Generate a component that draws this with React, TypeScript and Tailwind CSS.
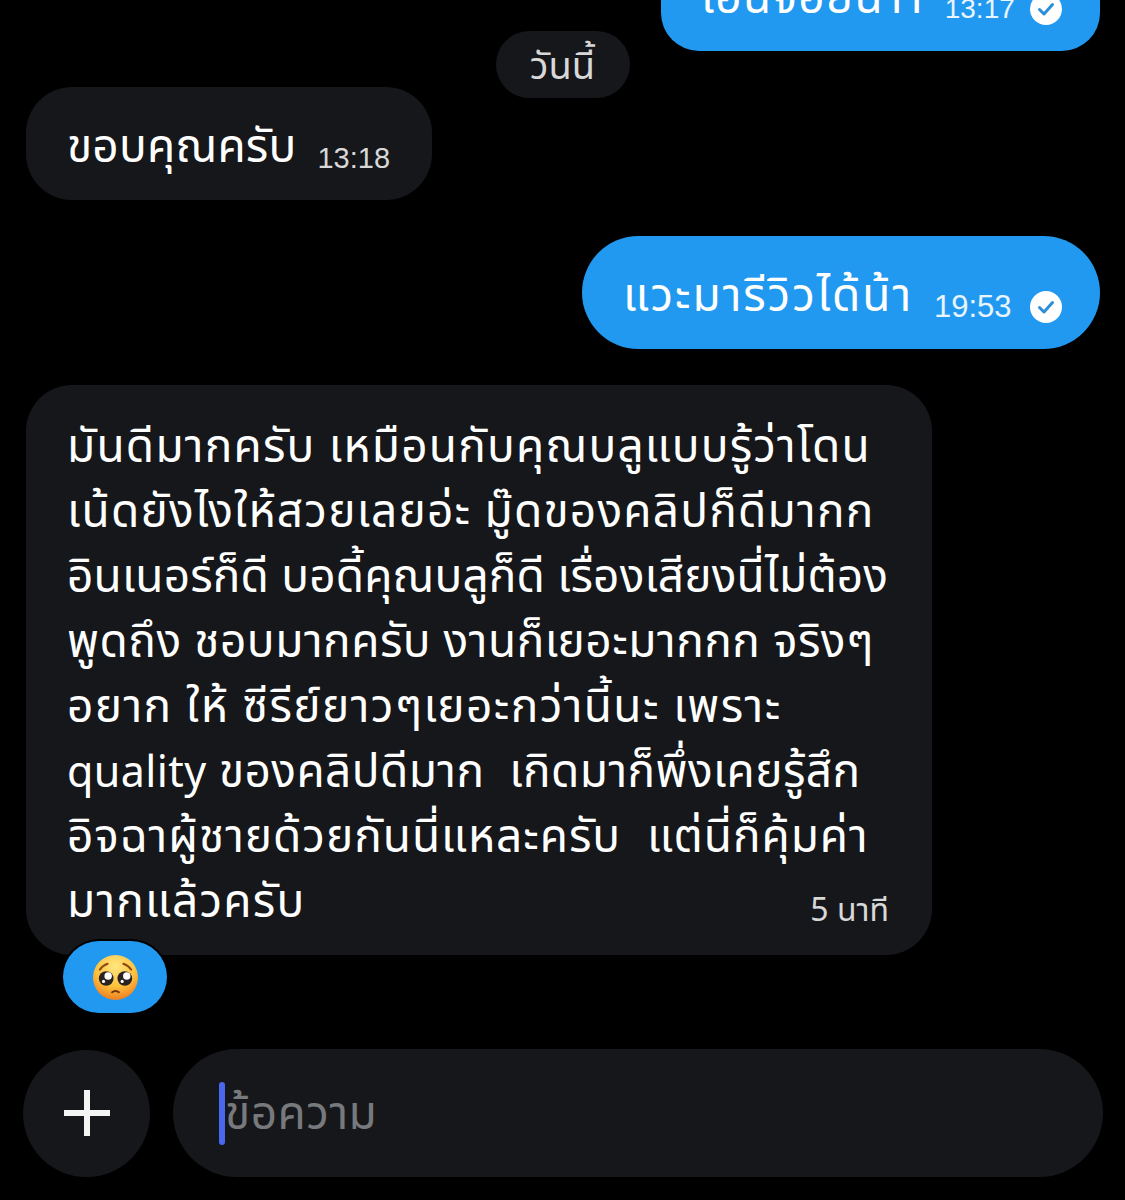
const thaiFont = "font-['Noto_Sans','Noto_Sans_Thai','Noto_Sans_CJK_SC','DejaVu_Sans',sans-serif]";

const lines = [
  { text: 'มันดีมากครับ เหมือนกับคุณบลูแบบรู้ว่าโดน', track: 'tracking-[1.2px]' },
  { text: 'เน้ดยังไงให้สวยเลยอ่ะ มู๊ดของคลิปก็ดีมากก', track: 'tracking-[1.2px]' },
  { text: 'อินเนอร์ก็ดี บอดี้คุณบลูก็ดี เรื่องเสียงนี่ไม่ต้อง', track: 'tracking-[0.15px]' },
  { text: 'พูดถึง ชอบมากครับ งานก็เยอะมากกก จริงๆ', track: 'tracking-[0.5px]' },
  { text: 'อยาก ให้ ซีรีย์ยาวๆเยอะกว่านี้นะ เพราะ', track: 'tracking-[1.4px]' },
];

const ReadTick = () => (
  <svg viewBox="0 0 32 32" className="size-8 shrink-0">
    <circle cx="16" cy="16" r="16" fill="#fff" />
    <path d="M9.500 16.500l4.500 4.500 8.500-9.500" fill="none" stroke="#2a8fd8" strokeWidth="3" strokeLinecap="round" strokeLinejoin="round" />
  </svg>
);

const PleadingFace = () => (
  <svg viewBox="0 0 48 48" className="size-[47px]">
    <defs>
      <radialGradient id="face" cx="50%" cy="25%" r="75%">
        <stop offset="0%" stopColor="#ffe680" />
        <stop offset="60%" stopColor="#fdc13c" />
        <stop offset="100%" stopColor="#ee7f22" />
      </radialGradient>
    </defs>
    <circle cx="24" cy="24" r="23" fill="url(#face)" />
    <path d="M8 16c2-3 5-5 8-6M40 16c-2-3-5-5-8-6" fill="none" stroke="#8a4a12" strokeWidth="2" strokeLinecap="round" />
    <circle cx="14.500" cy="25" r="7.500" fill="#2a2320" />
    <circle cx="33.500" cy="25" r="7.500" fill="#2a2320" />
    <circle cx="16.500" cy="22.500" r="3.800" fill="#fff" />
    <circle cx="35.500" cy="22.500" r="3.800" fill="#fff" />
    <circle cx="11.800" cy="28" r="1.600" fill="#fff" />
    <circle cx="30.800" cy="28" r="1.600" fill="#fff" />
    <path d="M20.500 39c2-1.500 5-1.500 7 0" fill="none" stroke="#6d3510" strokeWidth="2" strokeLinecap="round" />
  </svg>
);

export default function App() {
  return (
    <div className={`h-[1200px] w-[1125px] overflow-hidden bg-black text-white ${thaiFont}`}>
      <div className="flex justify-end pr-[25px]">
        <div className="-mt-[62px] flex h-[113px] w-[439px] items-center gap-[21px] rounded-[38px] bg-[#2299f0] pl-[40px]">
          <span className="text-[46px] leading-none tracking-[1.25px] whitespace-nowrap">เอ็นจ๋อยน้าา</span>
          <span className="mt-[29px] text-[28px] font-['Liberation_Sans',sans-serif] leading-none text-white/90">13:17</span>
          <span className="-ml-[6px] mt-[29px]"><ReadTick /></span>
        </div>
      </div>

      <div className="mt-[-20px] flex justify-center">
        <div className="flex h-[67px] w-[134px] items-center justify-center rounded-[34px] bg-[#16171a] text-[38px] text-[#d8d8d8]">วันนี้</div>
      </div>

      <div className="mt-[-11px] pl-[26px]">
        <div className="flex h-[113px] w-[406px] items-center gap-[21px] rounded-[46px] bg-[#16171a] pl-[41px]">
          <span className="text-[46px] leading-none tracking-[0.2px]">ขอบคุณครับ</span>
          <span className="mt-[30px] text-[29px] font-['Liberation_Sans',sans-serif] leading-none text-[#d8d8d8]">13:18</span>
        </div>
      </div>

      <div className="mt-[36px] flex justify-end pr-[25px]">
        <div className="flex h-[113px] w-[518px] items-center gap-[21px] rounded-[57px] bg-[#2299f0] pl-[41px]">
          <span className="text-[46px] leading-none tracking-[1.9px] whitespace-nowrap">แวะมารีวิวได้น้า</span>
          <span className="mt-[28px] text-[31px] font-['Liberation_Sans',sans-serif] leading-none text-white/90">19:53</span>
          <span className="-ml-[3px] mt-[28px]"><ReadTick /></span>
        </div>
      </div>

      <div className="relative mt-[36px] ml-[26px] h-[570px] w-[906px] rounded-[46px] bg-[#16171a] pl-[41px] pt-[27px]">
        {lines.map((line) => (
          <div key={line.text} className={`h-[65px] whitespace-pre text-[46px] leading-[65px] ${line.track}`}>{line.text}</div>
        ))}
        <div className="h-[65px] whitespace-pre text-[46px] leading-[65px] tracking-[0.4px]">
          <span className="text-[43px]">quality</span> ของคลิปดีมาก  เกิดมาก็พึ่งเคยรู้สึก
        </div>
        <div className="h-[65px] whitespace-pre text-[46px] leading-[65px] tracking-[0.95px]">อิจฉาผู้ชายด้วยกันนี่แหละครับ  แต่นี่ก็คุ้มค่า</div>
        <div className="flex items-start justify-between pr-[43px]">
          <span className="h-[65px] text-[46px] leading-[65px] tracking-[1.2px]">มากแล้วครับ</span>
          <span className="mt-[26px] text-[32px] leading-none text-[#d8d8d8]">5 นาที</span>
        </div>
        <div className="absolute left-[37px] top-[556px] flex h-[72px] w-[104px] items-center justify-center rounded-[36px] bg-[#2299f0] ring-2 ring-black">
          <PleadingFace />
        </div>
      </div>

      <div className="mt-[94px] flex items-center gap-[23px] pl-[23px]">
        <div className="flex size-[127px] items-center justify-center rounded-full bg-[#16171a]">
          <svg viewBox="0 0 48 48" className="size-[48px]">
            <path d="M24 1v46M1 24h46" stroke="#f4f4f4" strokeWidth="6" />
          </svg>
        </div>
        <div className="flex h-[128px] w-[930px] items-center rounded-[64px] bg-[#16171a] pl-[46px]">
          <span className="h-[63px] w-[6px] rounded-full bg-[#4a67ee]" />
          <span className="-mt-[4px] text-[46px] leading-none tracking-[0.5px] text-[#77797c]">ข้อความ</span>
        </div>
      </div>
    </div>
  );
}
